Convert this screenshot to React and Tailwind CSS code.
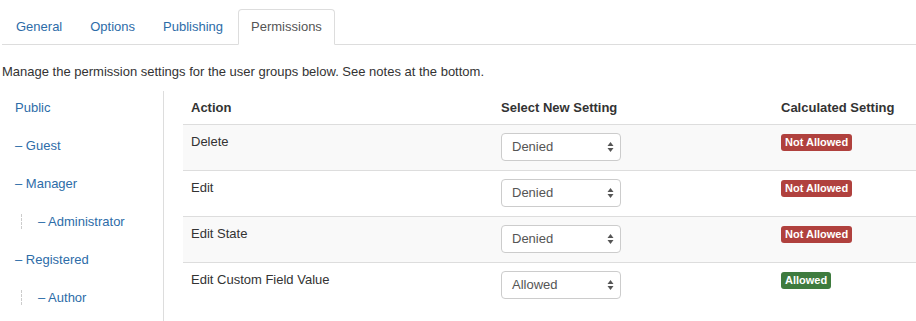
// App.jsx

import React from "react";

const TABS = ["General", "Options", "Publishing", "Permissions"];

const GROUPS = [
  { name: "Public", level: 0 },
  { name: "– Guest", level: 1 },
  { name: "– Manager", level: 1 },
  { name: "– Administrator", level: 2 },
  { name: "– Registered", level: 1 },
  { name: "– Author", level: 2 },
];

const ACTIONS = [
  { name: "Delete", setting: "Denied", calc: "Not Allowed" },
  { name: "Edit", setting: "Denied", calc: "Not Allowed" },
  { name: "Edit State", setting: "Denied", calc: "Not Allowed" },
  { name: "Edit Custom Field Value", setting: "Allowed", calc: "Allowed" },
];

function FakeSelect({ value }) {
  return (
    <div className="flex items-center justify-between w-[120px] h-[28px] border border-[#cccccc] rounded-[4px] bg-white pl-[10px] pr-[6px] text-[13px] text-[#555555]">
      <span>{value}</span>
      <svg width="7" height="12" viewBox="0 0 7 12">
        <path d="M3.5 1 L6.5 5 L0.5 5 Z" fill="#555555" />
        <path d="M3.5 11 L6.5 7 L0.5 7 Z" fill="#555555" />
      </svg>
    </div>
  );
}

export default function App() {
  return (
    <div
      className="bg-white text-[#333333] text-[13px] leading-[18px] w-[916px] h-[321px] overflow-hidden"
      style={{ fontFamily: '"Liberation Sans", Arial, sans-serif' }}
    >
      {/* Tabs */}
      <ul className="flex mt-[9px] ml-[2px] pl-px border-b border-[#dddddd]">
        {TABS.map((t) => {
          const active = t === "Permissions";
          return (
            <li
              key={t}
              className={
                active
                  ? "mr-[2px] -mb-px px-3 py-2 border border-[#dddddd] border-b-white rounded-t-[4px] bg-white text-[#555555]"
                  : "mr-[2px] -mb-px px-3 py-2 border border-transparent text-[#2d6ca8]"
              }
            >
              {t}
            </li>
          );
        })}
      </ul>

      <p className="mt-[18px] ml-[2px]">
        Manage the permission settings for the user groups below. See notes at
        the bottom.
      </p>

      <div className="flex mt-[10px]">
        {/* Groups */}
        <div className="w-[164px] h-[240px] border-r border-[#dddddd] flex flex-col">
          {GROUPS.map((g) => (
            <div
              key={g.name}
              className="h-[38px] pt-2 pl-[15px] text-[#2d6ca8] flex items-start"
            >
              {g.level === 2 ? (
                <>
                  <span className="ml-[6px] mt-[1px] h-[15px] border-l border-dashed border-[#cccccc]" />
                  <span className="ml-[16px]">{g.name}</span>
                </>
              ) : (
                <span>{g.name}</span>
              )}
            </div>
          ))}
        </div>

        {/* Table */}
        <div className="ml-[19px] flex-1">
          <div className="flex h-[33px] items-center font-bold">
            <div className="w-[310px] pl-2">Action</div>
            <div className="w-[280px] pl-2">Select New Setting</div>
            <div className="flex-1 pl-2">Calculated Setting</div>
          </div>
          {ACTIONS.map((a, i) => (
            <div
              key={a.name}
              className={
                "flex h-[46px] border-t border-[#dddddd] " +
                (i % 2 === 0 ? "bg-[#f9f9f9]" : "bg-white")
              }
            >
              <div className="w-[310px] pl-2 pt-2">{a.name}</div>
              <div className="w-[280px] pl-2 pt-2">
                <FakeSelect value={a.setting} />
              </div>
              <div className="flex-1 pl-2 pt-2">
                <span
                  className={
                    "inline-block px-[4px] py-[2px] rounded-[3px] text-white font-bold text-[11px] leading-[13px] " +
                    (a.calc === "Allowed" ? "bg-[#3e7b3e]" : "bg-[#b0413e]")
                  }
                >
                  {a.calc}
                </span>
              </div>
            </div>
          ))}
        </div>
      </div>
    </div>
  );
}
